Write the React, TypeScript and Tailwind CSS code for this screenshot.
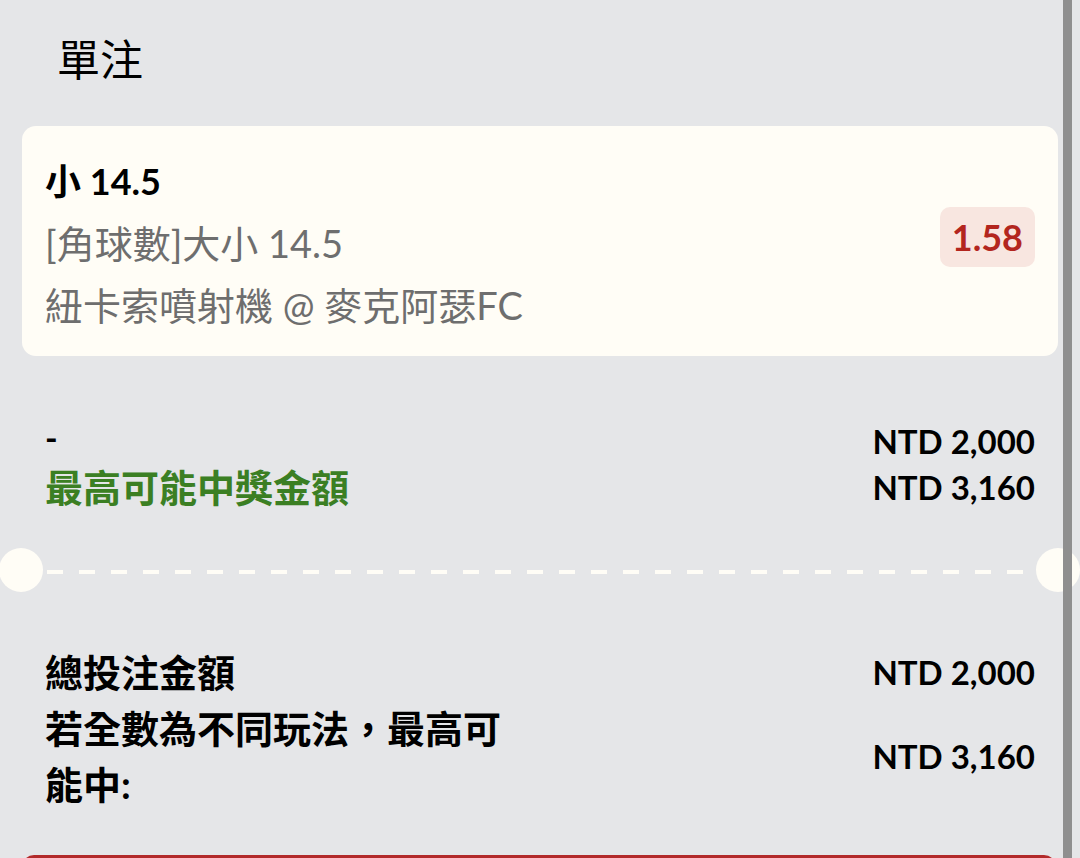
import React from 'react';

const FONT = "font-['Lato','Noto_Sans_CJK_TC',sans-serif]";

const Row: React.FC<{ label: React.ReactNode; value: string; labelClass?: string; rowClass?: string }> = ({ label, value, labelClass = '', rowClass = '' }) => (
  <div className={`flex items-center justify-between ${rowClass}`}>
    <div className={`max-w-[480px] ${labelClass}`}>{label}</div>
    <div className="text-[33px] font-bold text-black">{value}</div>
  </div>
);

export default function App() {
  return (
    <div className={`relative w-[1080px] h-[858px] overflow-hidden bg-[#e5e6e8] ${FONT}`}>
      {/* 標題 */}
      <div className="pt-[30px] pl-[57px] text-[43px] leading-[60px] text-black">單注</div>

      {/* 投注卡 */}
      <div className="mt-[36px] mx-[22px] h-[230px] rounded-[14px] bg-[#fffdf6] pl-[23px] pr-[23px] pt-[24px] flex items-center justify-between">
        <div className="self-start text-[38px] leading-[62px]">
          <div className="h-[62px] text-[36px] font-bold text-black">小 14.5</div>
          <div className="h-[62px] text-[#6e6e6e]">[角球數]大小 14.5</div>
          <div className="h-[62px] text-[#6e6e6e]">紐卡索噴射機 @ 麥克阿瑟FC</div>
        </div>
        <div className="mb-[32px] rounded-[10px] bg-[#f8e6e0] px-[12px] h-[60px] flex items-center text-[36px] font-bold text-[#b3261e]">
          1.58
        </div>
      </div>

      {/* 單注金額 */}
      <div className="mt-[62px] px-[45px] leading-[46px]">
        <Row rowClass="h-[46px]" label={<span className="text-[34px] font-bold">-</span>} value="NTD 2,000" />
        <Row rowClass="h-[46px]" label="最高可能中獎金額" labelClass="text-[38px] font-bold text-[#3b7f23]" value="NTD 3,160" />
      </div>

      {/* 分隔線 */}
      <div className="mt-[38px] flex items-center h-[44px]">
        <div className="-ml-[1px] w-[44px] h-[44px] rounded-full bg-[#fffdf6] shrink-0" />
        <div className="flex-1 mx-[4px] mt-[4px] h-[4px] bg-[repeating-linear-gradient(90deg,#fffdf6_0_16px,transparent_16px_32px)]" />
        <div className="w-[44px] h-[44px] rounded-full bg-[#fffdf6] shrink-0" />
      </div>

      {/* 總計 */}
      <div className="mt-[52px] px-[45px] text-[38px] font-bold leading-[56px] text-black">
        <Row rowClass="h-[56px]" label="總投注金額" value="NTD 2,000" />
        <Row label="若全數為不同玩法，最高可能中:" value="NTD 3,160" />
      </div>

      {/* 按鈕 */}
      <div className="absolute left-[22px] top-[855px] w-[1034px] h-[60px] rounded-[12px] bg-[#b22a2a]" />

      {/* 捲軸 */}
      <div className="absolute top-0 left-[1063px] w-[9px] h-full bg-[#8f8f8f]" />
    </div>
  );
}
